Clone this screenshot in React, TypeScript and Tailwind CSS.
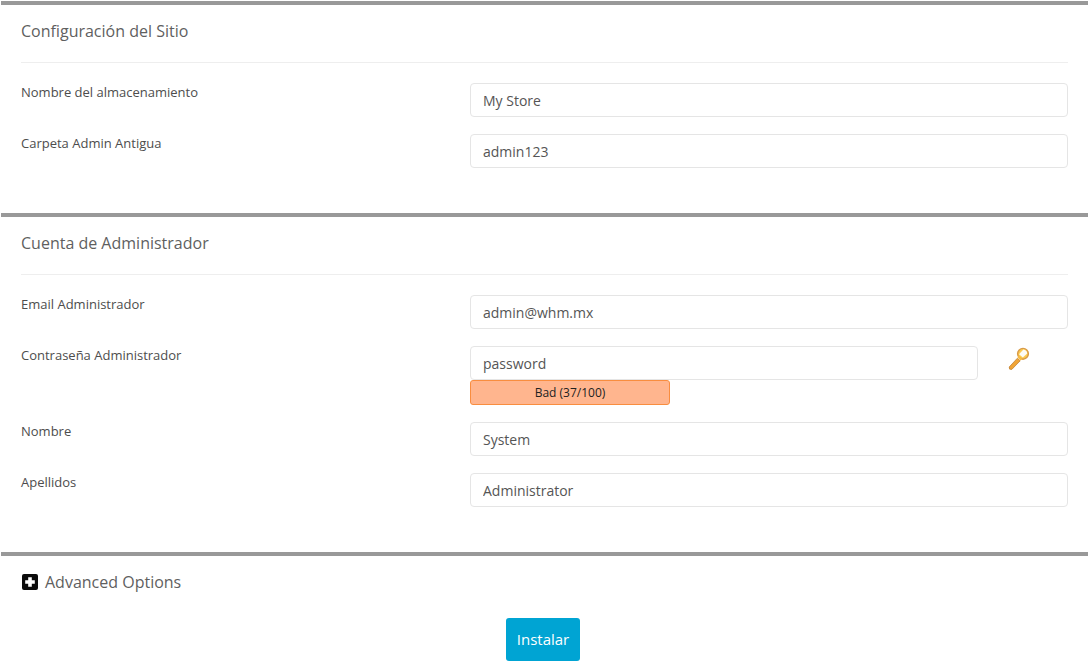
const font = "font-['Open_Sans',sans-serif]";

function Row({ label, value, className = "mb-[17px]" }: { label: string; value: string; className?: string }) {
  return (
    <div className={`flex ${className}`}>
      <label className="w-[449px] shrink-0 text-[13px] leading-[18px] font-medium text-[#4d4d4d]">{label}</label>
      <input
        readOnly
        value={value}
        className="h-[34px] w-[598px] rounded-[4px] border border-[#e5e5e5] bg-white px-3 text-[14px] text-[#555] outline-none"
      />
    </div>
  );
}

function Heading({ children }: { children: string }) {
  return (
    <div className="mx-5 mb-5 flex h-[58px] items-center border-b border-[#eee] pb-[5px]">
      <h2 className="text-[16px] text-[#5f5f5f]">{children}</h2>
    </div>
  );
}

export default function App() {
  return (
    <div className={`${font} h-[663px] w-[1090px] overflow-hidden bg-white pt-[1px] pl-[1px]`}>
      <div className="w-[1087px]">
        <section className="h-[212px] border-t-4 border-[#999]">
          <Heading>Configuración del Sitio</Heading>
          <div className="ml-5">
            <Row label="Nombre del almacenamiento" value="My Store" />
            <Row label="Carpeta Admin Antigua" value="admin123" />
          </div>
        </section>

        <section className="h-[339px] border-t-4 border-[#999]">
          <Heading>Cuenta de Administrador</Heading>
          <div className="ml-5">
            <Row label="Email Administrador" value="admin@whm.mx" />
            <div className="mb-[17px] flex">
              <label className="w-[449px] shrink-0 text-[13px] leading-[18px] font-medium text-[#4d4d4d]">Contraseña Administrador</label>
              <div>
                <div className="flex">
                  <input
                    readOnly
                    value="password"
                    className="h-[34px] w-[508px] rounded-[4px] border border-[#e5e5e5] bg-white px-3 text-[14px] text-[#555] outline-none"
                  />
                  <svg viewBox="0 0 24 24" className="mt-[1px] ml-[29px] h-6 w-6">
                    <path d="M2.2 20 L10.4 11.2 L13.2 13.8 L4.8 22.4 Q1.8 23 2.2 20 Z" fill="#f0a436" stroke="#b9772a" strokeWidth="0.7" />
                    <circle cx="16" cy="6.8" r="5.4" fill="#fcc94e" stroke="#d89a48" strokeWidth="1.4" />
                    <path d="M12 7.2 L16.4 2.6 Q19.8 3 20.2 6.4 L15.8 10.6 Z" fill="#fdfbf5" />
                    <path d="M10.6 10.4 L13.6 13.6 L15.4 12 L11.4 8.4 Z" fill="#f8bb43" />
                  </svg>
                </div>
                <div className="flex h-[25px] w-[200px] items-center justify-center rounded-[3px] border border-[#f98d3f] bg-[#ffb58e] text-[12px] text-[#222]">
                  Bad (37/100)
                </div>
              </div>
            </div>
            <Row label="Nombre" value="System" />
            <Row label="Apellidos" value="Administrator" />
          </div>
        </section>

        <section className="border-t-4 border-[#999]">
          <div className="ml-[21px] flex h-[52px] items-center gap-[7px]">
            <svg viewBox="0 0 16 16" className="h-4 w-4">
              <rect x="0" y="0" width="16" height="16" rx="2" fill="#0b0b0b" />
              <path d="M6.2 3.2 H9.8 V6.2 H12.8 V9.8 H9.8 V12.8 H6.2 V9.8 H3.2 V6.2 H6.2 Z" fill="#fff" />
            </svg>
            <span className="text-[16px] text-[#5f5f5f]">Advanced Options</span>
          </div>
          <div className="mt-[10px] flex justify-center pr-[3px]">
            <button className="h-[43px] w-[74px] rounded-[3px] bg-[#00a4d3] text-[15px] text-white">Instalar</button>
          </div>
        </section>
      </div>
    </div>
  );
}
